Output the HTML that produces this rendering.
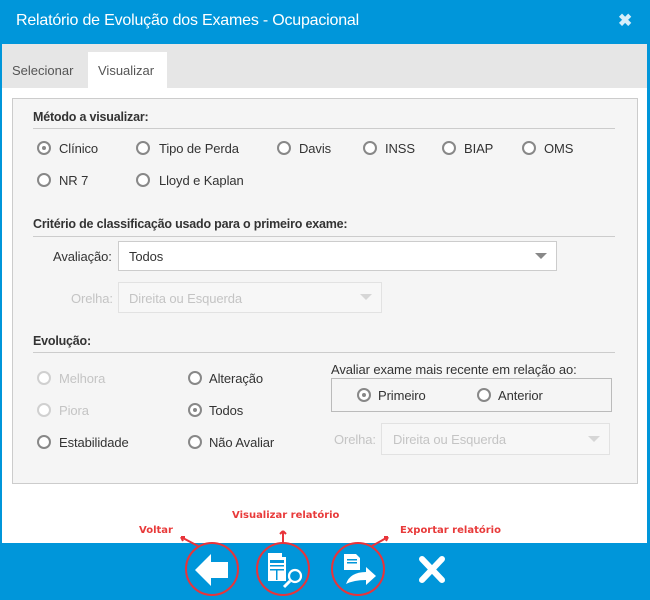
<!DOCTYPE html>
<html><head><meta charset="utf-8"><style>
*{margin:0;padding:0;box-sizing:border-box}
body{width:650px;height:600px;background:#0096da;font-family:"Liberation Sans",sans-serif;position:relative;overflow:hidden;color:#333;font-size:13px}
.a{position:absolute;white-space:nowrap}
.hdr{left:0;top:0;width:650px;height:44px;background:#0096da}
.win{left:2px;top:44px;width:645px;height:499px;background:#fff}
.tabs{left:2px;top:44px;width:645px;height:44px;background:#e6e6e6}
.panel{left:12px;top:98px;width:626px;height:386px;background:#f5f5f5;border:1px solid #ccc}
.h{font-weight:bold;font-size:12.5px;color:#333;letter-spacing:-0.2px}
.line{height:1px;background:#ccc;left:33px;width:582px}
.r{width:14px;height:14px;border:2px solid #888;border-radius:50%;background:#fff}
.r.on::after{content:"";position:absolute;left:3px;top:3px;width:4px;height:4px;border-radius:50%;background:#888}
.r.dis{border-color:#d0d0d0}
.t{font-size:13px;color:#333;letter-spacing:-0.1px}
.d{color:#c4c4c4}
.sel{background:#fff;border:1px solid #ccc}
.sel.dis{background:#f7f7f7;border-color:#e2e2e2}
.car{width:0;height:0;border-left:6px solid transparent;border-right:6px solid transparent;border-top:6px solid #888}
.lbl{color:#e83a3a;font-weight:bold;font-size:10px;font-family:"DejaVu Sans",sans-serif}
</style></head><body>
<div class="a hdr"></div>
<div class="a" style="left:16px;top:12px;color:#fff;font-size:16px;letter-spacing:-0.2px">Relatório de Evolução dos Exames - Ocupacional</div>
<div class="a" style="left:618px;top:11px;color:#d6eefa;font-size:17px;font-weight:bold">✖</div>
<div class="a win"></div>
<div class="a tabs"></div>
<div class="a" style="left:88px;top:52px;width:79px;height:36px;background:#fff"></div>
<div class="a" style="left:12px;top:63px;color:#555;font-size:13px">Selecionar</div>
<div class="a" style="left:98px;top:63px;color:#555;font-size:13px">Visualizar</div>
<div class="a panel"></div>

<div class="a h" style="left:33px;top:110px">Método a visualizar:</div>
<div class="a line" style="top:128px"></div>
<div class="a r on" style="left:37px;top:141px"></div><div class="a t" style="left:59px;top:141px">Clínico</div>
<div class="a r" style="left:136px;top:141px"></div><div class="a t" style="left:159px;top:141px">Tipo de Perda</div>
<div class="a r" style="left:277px;top:141px"></div><div class="a t" style="left:299px;top:141px">Davis</div>
<div class="a r" style="left:363px;top:141px"></div><div class="a t" style="left:385px;top:141px">INSS</div>
<div class="a r" style="left:442px;top:141px"></div><div class="a t" style="left:464px;top:141px">BIAP</div>
<div class="a r" style="left:522px;top:141px"></div><div class="a t" style="left:544px;top:141px">OMS</div>
<div class="a r" style="left:37px;top:173px"></div><div class="a t" style="left:59px;top:173px">NR 7</div>
<div class="a r" style="left:136px;top:173px"></div><div class="a t" style="left:159px;top:173px">Lloyd e Kaplan</div>

<div class="a h" style="left:33px;top:217px">Critério de classificação usado para o primeiro exame:</div>
<div class="a line" style="top:236px"></div>
<div class="a t" style="left:53px;top:249px">Avaliação:</div>
<div class="a sel" style="left:118px;top:241px;width:439px;height:30px"></div>
<div class="a t" style="left:129px;top:249px">Todos</div>
<div class="a car" style="left:535px;top:253px"></div>
<div class="a t d" style="left:71px;top:291px">Orelha:</div>
<div class="a sel dis" style="left:118px;top:282px;width:264px;height:31px"></div>
<div class="a t d" style="left:129px;top:291px">Direita ou Esquerda</div>
<div class="a car" style="left:360px;top:294px;border-top-color:#d6d6d6"></div>

<div class="a h" style="left:33px;top:334px">Evolução:</div>
<div class="a line" style="top:352px"></div>
<div class="a r dis" style="left:37px;top:371px"></div><div class="a t d" style="left:59px;top:371px">Melhora</div>
<div class="a r dis" style="left:37px;top:403px"></div><div class="a t d" style="left:59px;top:403px">Piora</div>
<div class="a r" style="left:37px;top:435px"></div><div class="a t" style="left:59px;top:435px">Estabilidade</div>
<div class="a r" style="left:188px;top:371px"></div><div class="a t" style="left:209px;top:371px">Alteração</div>
<div class="a r on" style="left:188px;top:403px"></div><div class="a t" style="left:209px;top:403px">Todos</div>
<div class="a r" style="left:188px;top:435px"></div><div class="a t" style="left:209px;top:435px">Não Avaliar</div>

<div class="a t" style="left:331px;top:362px">Avaliar exame mais recente em relação ao:</div>
<div class="a" style="left:331px;top:378px;width:281px;height:34px;border:1px solid #bbb"></div>
<div class="a r on" style="left:357px;top:388px"></div><div class="a t" style="left:378px;top:388px">Primeiro</div>
<div class="a r" style="left:477px;top:388px"></div><div class="a t" style="left:498px;top:388px">Anterior</div>
<div class="a t d" style="left:334px;top:432px">Orelha:</div>
<div class="a sel dis" style="left:381px;top:423px;width:229px;height:32px"></div>
<div class="a t d" style="left:393px;top:432px">Direita ou Esquerda</div>
<div class="a car" style="left:588px;top:436px;border-top-color:#d6d6d6"></div>

<div class="a lbl" style="left:139px;top:525px">Voltar</div>
<div class="a lbl" style="left:232px;top:510px">Visualizar relatório</div>
<div class="a lbl" style="left:400px;top:525px">Exportar relatório</div>

<svg class="a" style="left:0;top:500px" width="650" height="100">
<g fill="#fff">
<polygon points="195,70 211,54 211,62 228,62 228,78 211,78 211,86"/>
<path d="M268 53h14v4h4v24h-18z"/>
<rect x="270" y="60" width="14" height="3" fill="#0096da"/>
<rect x="270" y="65" width="14" height="1.5" fill="#0096da"/>
<rect x="270" y="69" width="14" height="1.5" fill="#0096da"/>
<rect x="276" y="70" width="1.5" height="10" fill="#0096da"/>
<path d="M344 54h12l4 4v12h-16z"/>
<path d="M346 84q4-12 20-12v-5l10 9-10 9v-5q-12 0-20 4z"/>
</g>
<path d="M422 59l20 21M442 59l-20 21" stroke="#fff" stroke-width="6" stroke-linecap="round"/>
<rect x="347" y="59" width="10" height="1.5" fill="#0096da"/>
<rect x="347" y="62" width="10" height="1.5" fill="#0096da"/>
<circle cx="295" cy="76" r="6" fill="none" stroke="#fff" stroke-width="2.2"/>
<line x1="290" y1="81" x2="284" y2="87" stroke="#fff" stroke-width="3"/>
<g fill="none" stroke="#e8343a" stroke-width="2">
<circle cx="212" cy="69" r="26"/><circle cx="283" cy="69" r="26"/><circle cx="358" cy="69" r="26"/>
<path d="M198 46l-17-9m0 0l2 4m-2-4l4 0"/>
<path d="M283 43v-12m0 0l-3 3m3-3l3 3"/>
<path d="M372 46l16-9m0 0l-4 0m4 0l-2 4"/>
</g>
</svg>
</body></html>
